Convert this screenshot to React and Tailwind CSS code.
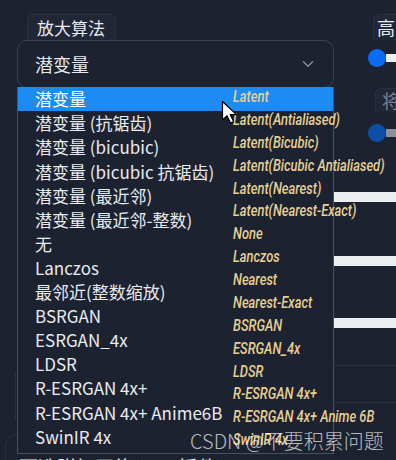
import { ChevronDown } from 'lucide-react';

const OPTIONS = [
  '潜变量',
  '潜变量 (抗锯齿)',
  '潜变量 (bicubic)',
  '潜变量 (bicubic 抗锯齿)',
  '潜变量 (最近邻)',
  '潜变量 (最近邻-整数)',
  '无',
  'Lanczos',
  '最邻近(整数缩放)',
  'BSRGAN',
  'ESRGAN_4x',
  'LDSR',
  'R-ESRGAN 4x+',
  'R-ESRGAN 4x+ Anime6B',
  'SwinIR 4x',
];

// translation overlay from the browser extension
const TRANSLATIONS = [
  'Latent',
  'Latent(Antialiased)',
  'Latent(Bicubic)',
  'Latent(Bicubic Antialiased)',
  'Latent(Nearest)',
  'Latent(Nearest-Exact)',
  'None',
  'Lanczos',
  'Nearest',
  'Nearest-Exact',
  'BSRGAN',
  'ESRGAN_4x',
  'LDSR',
  'R-ESRGAN 4x+',
  'R-ESRGAN 4x+ Anime 6B',
  'SwinIR 4x',
];

function Cursor() {
  return (
    <svg width="19" height="25" viewBox="0 0 19 25" className="absolute left-[221px] top-[100px]">
      <path
        d="M1.5 1.5 L1.5 20 L6 15.8 L9.5 23 L12.6 21.6 L9.2 14.6 L15.5 14.6 Z"
        fill="#ffffff"
        stroke="#000000"
        strokeWidth="1.2"
        strokeLinejoin="round"
      />
    </svg>
  );
}

function Slider({ knob, track }) {
  return (
    <div className="flex h-[18px] items-center pl-[34px]">
      <div className={`h-[18px] w-[18px] shrink-0 rounded-full ${knob}`} />
      <div className={`h-[8px] flex-1 ${track}`} />
    </div>
  );
}

export default function App() {
  return (
    <div className="relative h-[460px] w-[396px] overflow-hidden bg-[#1d2231] font-['Noto_Sans_CJK_SC','Noto_Sans',sans-serif] text-[#e9ebef]">
      <div className="flex">
        {/* left column */}
        <div className="w-[334px] shrink-0 pl-[17px]">
          <div className="ml-[10px] mt-[14px] flex h-[26px] w-[89px] items-center rounded-t-md border border-b-0 border-[#2a3041] bg-[#212737] pl-[9px] text-[17px]">
            放大算法
          </div>
          <div className="flex h-[48px] items-center justify-between rounded-[10px] border border-[#3b4254] pl-[17px] pr-[16px] text-[18px]">
            <span>潜变量</span>
            <ChevronDown className="h-[18px] w-[18px] text-[#8f95a1]" strokeWidth={1.6} />
          </div>
          <div className="ml-[-2px] mt-[283px] h-[50px] border-l border-[#2a3142]" />
          <div className="ml-[-12px] mt-[13px] h-[60px] whitespace-nowrap rounded-tl-xl border-l border-t border-[#2a3142] pl-[13px] pt-[18px] text-[19px]">
            可选附加网络(Lora插件)
          </div>
        </div>

        {/* right column, partly visible */}
        <div className="flex-1">
          <div className="ml-[39px] mt-[14px] flex h-[26px] items-center rounded-tl-md border border-r-0 border-b-0 border-[#2a3041] bg-[#212737] pl-[3px] text-[18px]">
            高
          </div>
          <div className="mt-[9px]">
            <Slider knob="bg-[#0a6cf5]" track="bg-[#eef0f3]" />
          </div>
          <div className="ml-[41px] mt-[21px] flex h-[24px] items-center rounded-tl-md border border-r-0 border-b-0 border-[#2a3041] bg-[#212737] pl-[6px] text-[18px] text-[#7d8391]">
            将
          </div>
          <div className="mt-[12px]">
            <Slider knob="bg-[#0c50a6]" track="bg-[#8b8f98]" />
          </div>
          <div className="mt-[50px] h-[10px] bg-[#eceef2]" />
          <div className="mt-[54px] h-[10px] bg-[#eceef2]" />
          <div className="mt-[52px] h-[10px] bg-[#eceef2]" />
          <div className="mt-[37px] h-px bg-[#2a3142]" />
          <div className="mt-[36px] h-px bg-[#2a3142]" />
        </div>
      </div>

      {/* open dropdown list */}
      <ul className="absolute left-[17px] top-[87px] h-[367px] w-[317px] border border-t-0 border-[#4a5061] bg-[#1d2231] text-[17px]">
        {OPTIONS.map((opt, i) => (
          <li
            key={opt}
            className={`flex h-[24.1px] items-center whitespace-nowrap pl-[17px] ${
              i === 0 ? 'bg-[#1c8cf4] text-white' : ''
            }`}
          >
            {opt}
          </li>
        ))}
      </ul>

      <div className="absolute left-[233px] top-[85.5px] origin-top-left scale-x-[0.76] font-['Roboto',sans-serif] text-[17px] font-medium italic text-[#e6d095]">
        {TRANSLATIONS.map((t) => (
          <div key={t} className="flex h-[22.87px] items-center whitespace-nowrap">
            {t}
          </div>
        ))}
      </div>

      <Cursor />

      <div className="absolute left-[190px] top-[426px] whitespace-nowrap font-['Noto_Sans_CJK_SC',sans-serif] text-[20px] font-light text-white/70">
        CSDN @不要积累问题
      </div>
    </div>
  );
}
